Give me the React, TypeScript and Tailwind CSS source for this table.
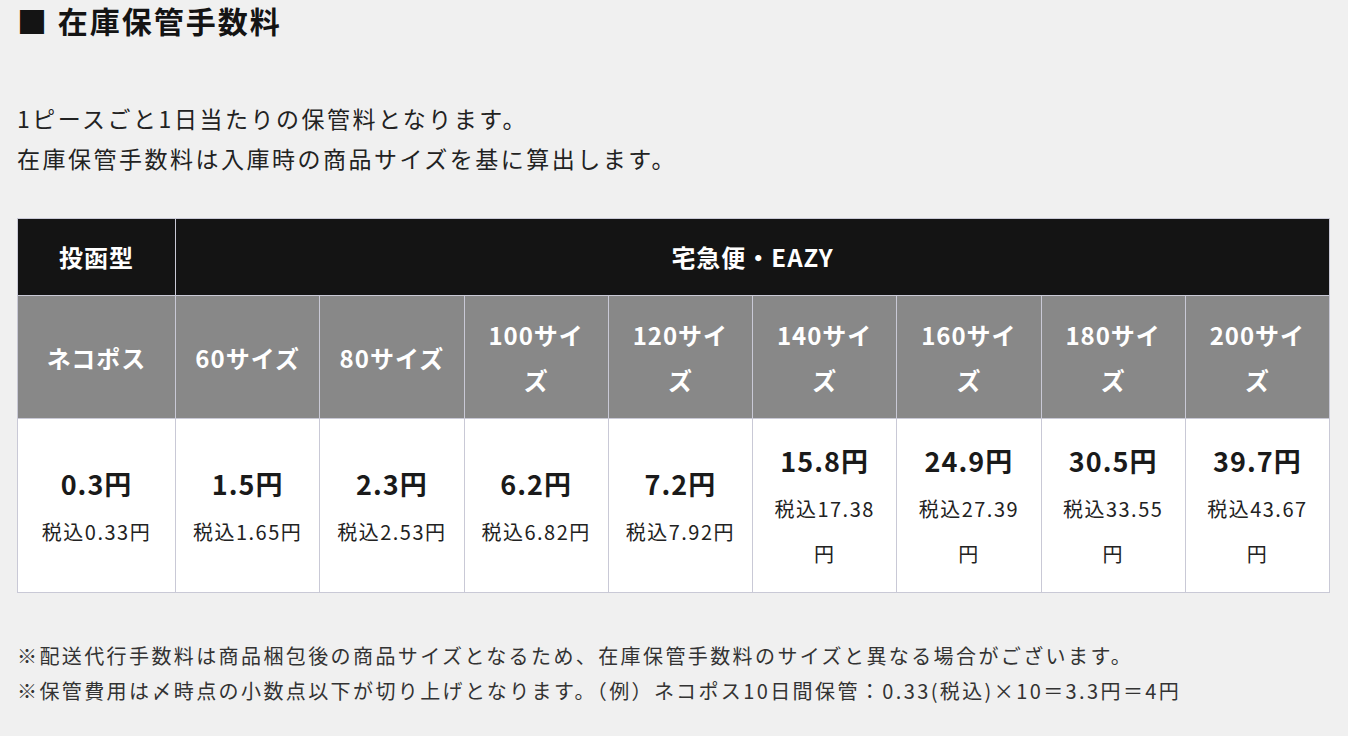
import React from 'react';

const sizes = ['60サイズ', '80サイズ', '100サイズ', '120サイズ', '140サイズ', '160サイズ', '180サイズ', '200サイズ'];

const prices = [
  { price: '0.3円', tax: '税込0.33円' },
  { price: '1.5円', tax: '税込1.65円' },
  { price: '2.3円', tax: '税込2.53円' },
  { price: '6.2円', tax: '税込6.82円' },
  { price: '7.2円', tax: '税込7.92円' },
  { price: '15.8円', tax: '税込17.38円' },
  { price: '24.9円', tax: '税込27.39円' },
  { price: '30.5円', tax: '税込33.55円' },
  { price: '39.7円', tax: '税込43.67円' },
];

const font = { fontFamily: '"Noto Sans CJK JP", "Noto Sans", sans-serif' };

export default function App() {
  return (
    <div
      className="min-h-[736px] w-[1348px] bg-[#f0f0f0] px-[17px] text-[#1a1a1a]"
      style={font}
    >
      <h2 className="text-[30px] font-bold leading-[40px] tracking-[2px] text-[#141414]">■ 在庫保管手数料</h2>

      <div className="mt-[58px] text-[23px] leading-[40px] tracking-[2.5px] text-[#222]">
        <p>1ピースごと1日当たりの保管料となります。</p>
        <p>在庫保管手数料は入庫時の商品サイズを基に算出します。</p>
      </div>

      <table className="mt-[40px] w-[1313px] table-fixed border-collapse border border-[#c9c9d6] text-center">
        <colgroup>
          <col className="w-[158px]" />
        </colgroup>
        <thead>
          <tr className="bg-[#141414] text-white">
            <th className="border border-[#c9c9d6] px-[15px] py-[16px] text-[24px] font-bold leading-[44px] tracking-[1px]">投函型</th>
            <th colSpan={8} className="border border-[#c9c9d6] px-[15px] py-[16px] text-[24px] font-bold leading-[44px] tracking-[1px]">
              宅急便・EAZY
            </th>
          </tr>
          <tr className="bg-[#888888] text-white">
            <th className="border border-[#c9c9d6] px-[15px] py-[16px] text-[24px] font-bold leading-[45px] tracking-[1px]">ネコポス</th>
            {sizes.map((s) => (
              <th key={s} className="border border-[#c9c9d6] px-[15px] py-[16px] text-[24px] font-bold leading-[45px] tracking-[1px]">
                {s}
              </th>
            ))}
          </tr>
        </thead>
        <tbody>
          <tr className="bg-white">
            {prices.map((p) => (
              <td key={p.price} className="h-[173px] border border-[#c9c9d6] px-[15px] py-[16px] align-middle">
                <div className="text-[27px] font-bold leading-[51px] tracking-[1px]">{p.price}</div>
                <div className="text-[20px] leading-[45px] tracking-[1.5px] text-[#222]">{p.tax}</div>
              </td>
            ))}
          </tr>
        </tbody>
      </table>

      <div className="mt-[45px] text-[20px] leading-[35px] tracking-[2.4px] text-[#333]">
        <p>※配送代行手数料は商品梱包後の商品サイズとなるため、在庫保管手数料のサイズと異なる場合がございます。</p>
        <p>※保管費用は〆時点の小数点以下が切り上げとなります。（例）ネコポス10日間保管：0.33(税込)×10＝3.3円＝4円</p>
      </div>
    </div>
  );
}
